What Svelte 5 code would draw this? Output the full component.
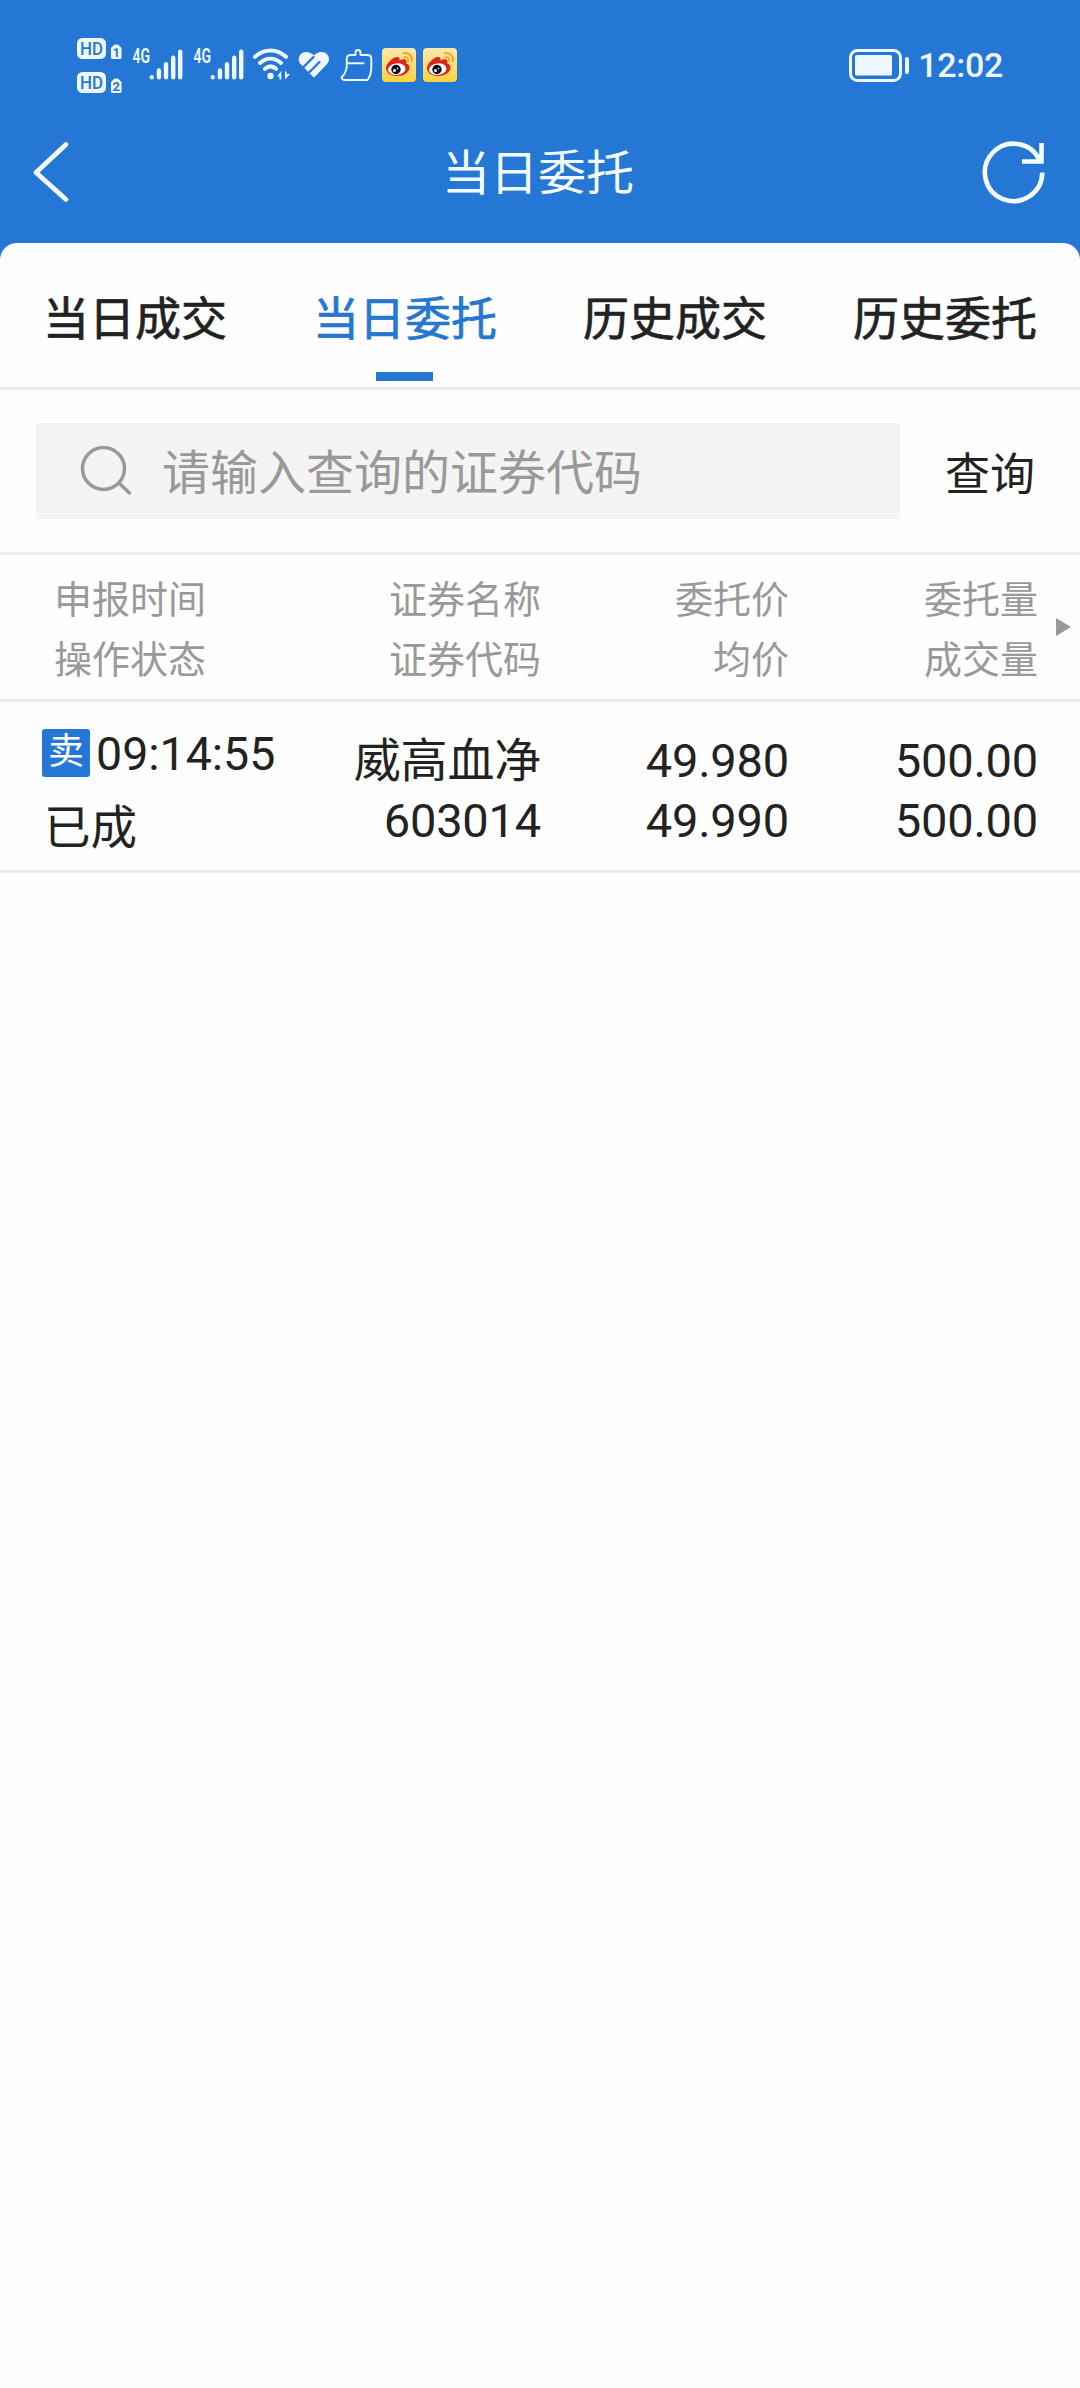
<script lang="ts">
    type Order = {
        side: string;
        time: string;
        status: string;
        name: string;
        code: string;
        price: string;
        avgPrice: string;
        amount: string;
        filled: string;
    };

    const tabs = ['当日成交', '当日委托', '历史成交', '历史委托'];
    const columns = [
        ['申报时间', '操作状态'],
        ['证券名称', '证券代码'],
        ['委托价', '均价'],
        ['委托量', '成交量']
    ];
    const orders: Order[] = [
        {
            side: '卖',
            time: '09:14:55',
            status: '已成',
            name: '威高血净',
            code: '603014',
            price: '49.980',
            avgPrice: '49.990',
            amount: '500.00',
            filled: '500.00'
        }
    ];

    let active = $state(1);
    let keyword = $state('');
</script>

{#snippet hd(slot: string)}
    <svg class="hd" width="45" height="21" viewBox="0 0 45 21">
        <rect width="29" height="21" rx="5.5" fill="#eef8ff" />
        <text x="3" y="16.600" font-size="18" font-weight="500" textLength="23" lengthAdjust="spacingAndGlyphs" fill="#2577d5">HD</text>
        <path d="M37.5 6.5h3.500l3.500 3.500v9.500a1.500 1.500 0 0 1-1.500 1.500h-7.500a1.500 1.500 0 0 1-1.500-1.500v-9.500z" fill="#eef8ff" />
        <text x="39.3" y="18.800" font-size="13" font-weight="700" text-anchor="middle" fill="#2577d5">{slot}</text>
    </svg>
{/snippet}

{#snippet signal()}
    <svg class="signal" width="51" height="50" viewBox="0 -8 51 50">
        <text class="net" x="0.500" y="14.500" font-size="20" font-weight="600" textLength="17.500" lengthAdjust="spacingAndGlyphs">4G</text>
        <path class="line" d="M19.700 29.300v.01M26.900 22.500v6.800M34 16.200v13.100M41.200 9.800v19.500M48.200 3.800v25.500" stroke-width="4.400" />
    </svg>
{/snippet}

{#snippet weibo()}
    <svg class="weibo" width="34" height="34" viewBox="0 0 34 34">
        <defs>
            <linearGradient id="weibo-bg" x1="0" y1="0" x2="0" y2="1">
                <stop offset="0" stop-color="#fde9ae" />
                <stop offset="1" stop-color="#ffd23c" />
            </linearGradient>
        </defs>
        <rect width="34" height="34" rx="4" fill="url(#weibo-bg)" />
        <path d="M4 20c0-4 6-10 10.500-11 2.500-.4 3.500 1 3 3.500 3-1.400 6.500-1.800 7 .5.200 1-.2 2-.5 2.500 2.500.6 3.500 2 3.500 4 0 5-6.500 8.500-12.500 8.500S4 25 4 20z" fill="#dd2418" />
        <ellipse cx="14.700" cy="21.200" rx="8.800" ry="5.800" transform="rotate(-7 14.700 21.200)" fill="#fff" />
        <circle cx="14" cy="21.500" r="4.700" fill="#111" />
        <circle cx="12.500" cy="22.600" r="1.500" fill="#fff" />
        <circle cx="15.500" cy="20.500" r=".8" fill="#fff" />
        <path d="M21.500 5.300c5-1.200 9.500 3.200 8.300 8M22.300 9.200c2.700-.6 4.300 1.400 3.700 3.800" stroke="#f2a32c" stroke-width="1.900" />
    </svg>
{/snippet}

<div class="page">
    <header>
        <div class="status">
            <div class="sims">
                {@render hd('1')}
                {@render hd('2')}
            </div>
            {@render signal()}
            {@render signal()}
            <svg class="wifi" width="40" height="34" viewBox="0 0 40 34">
                <path class="line" d="M3 8.800C12 .3 25 .3 34 8.800M8 15c6.500-5.800 14.500-5.800 21 0M13 20.800c3.500-3.200 7.500-3.200 11 0" stroke-width="4" />
                <circle cx="18.500" cy="28" r="3.200" fill="#eef8ff" />
                <path d="M25 28.500l4.300-5.500v8.500h-1.800v-3zM38 26l-5 5.500v-8.500l1.700 1v2z" fill="#eef8ff" />
            </svg>
            <svg class="heart" width="32" height="28" viewBox="0 0 32 28">
                <path d="M16 26.800L2.500 13C-2 7.500 2.500.3 9 1c3 .3 5.200 1.700 7 3.300C18 2.500 20 1.200 23 1c7-.3 10.500 7 6 12z" fill="#eef8ff" />
                <path d="M4 17.500L15.500 6M10 22.500L21.500 11" stroke="#2577d5" stroke-width="2.300" />
            </svg>
            <svg class="broom" width="34" height="34" viewBox="0 0 34 34">
                <path class="line" d="M15.500 7V4.500a2.500 2.500 0 0 1 5 0V7h7q3.800 0 3.800 3.500V19q0 8-3.800 13H5.500Q1.800 32 1.500 29.500C4.500 26.500 6.500 23 6.800 18v-7.500q0-3.500 3.700-3.500zM8.500 15.200h15" stroke-width="1.900" />
            </svg>
            {@render weibo()}
            {@render weibo()}
            <svg class="battery" width="61" height="33" viewBox="0 0 61 33">
                <rect class="line" x="1.500" y="1.500" width="50" height="30" rx="7" stroke-width="3" />
                <rect x="6" y="6" width="37" height="20.500" rx="1.500" fill="#eef8ff" />
                <path class="line" d="M58 10v13" stroke-width="4" />
            </svg>
            <span class="clock">12:02</span>
        </div>
        <nav>
            <svg class="back" width="44" height="66" viewBox="0 0 44 66">
                <path class="line" d="M36 4.500L6 32.500l30 27" stroke-width="4.800" />
            </svg>
            <h1>当日委托</h1>
            <svg class="refresh" width="66" height="66" viewBox="0 0 66 66">
                <path class="line" d="M61.300 32.500A28.700 28.700 0 1 1 58.500 20" stroke-width="4.600" />
                <path class="line" d="M60.500 3v18.500H41" stroke-width="4.600" />
            </svg>
        </nav>
    </header>

    <main>
        <div class="tabs">
            {#each tabs as tab, i}
                <button class:active={active === i} onclick={() => (active = i)}>{tab}</button>
            {/each}
        </div>

        <div class="search">
            <label>
                <svg width="54" height="54" viewBox="0 0 54 54">
                    <circle cx="24.500" cy="24.500" r="21" />
                    <path d="M39.500 38.500L51.500 50" />
                </svg>
                <input bind:value={keyword} placeholder="请输入查询的证券代码" />
            </label>
            <button>查询</button>
        </div>

        <div class="grid head">
            {#each columns as [top, bottom]}
                <div class="cell">
                    <span>{top}</span>
                    <span>{bottom}</span>
                </div>
            {/each}
            <i class="more"></i>
        </div>

        {#each orders as order}
            <div class="grid row">
                <div class="cell first">
                    <span class="when"><b>{order.side}</b><span>{order.time}</span></span>
                    <span class="state">{order.status}</span>
                </div>
                <div class="cell">
                    <span>{order.name}</span>
                    <span>{order.code}</span>
                </div>
                <div class="cell">
                    <span>{order.price}</span>
                    <span>{order.avgPrice}</span>
                </div>
                <div class="cell">
                    <span>{order.amount}</span>
                    <span>{order.filled}</span>
                </div>
            </div>
        {/each}
    </main>
</div>

<style>
    :global(body) {
        margin: 0;
        background: #fefefe;
    }
    .page {
        width: 1080px;
        min-height: 2388px;
        background: #2577d5;
        display: flex;
        flex-direction: column;
        font-family: Roboto, 'Noto Sans CJK SC', sans-serif;
        color: #222;
    }
    button,
    input {
        border: 0;
        padding: 0;
        background: none;
        font: inherit;
        color: inherit;
        outline: none;
    }
    header {
        height: 243px;
    }
    header svg {
        flex: none;
        fill: none;
        stroke-linecap: round;
        stroke-linejoin: round;
    }
    .line {
        stroke: #eef8ff;
    }

    /* status bar */
    .status {
        display: flex;
        align-items: center;
        height: 130px;
        padding: 0 77px 0 77px;
        box-sizing: border-box;
    }
    .sims {
        display: flex;
        flex-direction: column;
        gap: 13px;
        margin-right: 10px;
    }
    .sims svg {
        display: block;
    }
    .net {
        fill: #eef8ff;
    }
    .signal {
        margin-right: 10px;
    }
    .wifi {
        margin-left: -2px;
    }
    .heart {
        margin: 0 10px 0 6px;
    }
    .weibo {
        margin-left: 7.500px;
    }
    .battery {
        margin-left: auto;
    }
    .clock {
        margin-left: 8px;
        font-size: 34px;
        font-weight: 500;
        letter-spacing: -0.3px;
        color: #eef8ff;
    }

    nav {
        display: flex;
        align-items: center;
        justify-content: space-between;
        height: 85px;
        padding: 0 33px 0 30px;
    }
    nav .line {
        stroke: #f6fdff;
    }
    nav .refresh {
        stroke-linecap: butt;
        stroke-linejoin: miter;
    }
    h1 {
        margin: 0 0 7px 21px;
        font-size: 48px;
        font-weight: 400;
        color: #f6fdff;
    }

    main {
        flex: 1;
        background: #fefefe;
        border-radius: 17px 17px 0 0;
    }
    .tabs {
        display: flex;
        height: 144px;
        border-bottom: 3px solid #ececec;
    }
    .tabs button {
        position: relative;
        flex: 1;
        font-size: 46px;
        -webkit-text-stroke: 0.7px currentColor;
    }
    .tabs .active {
        color: #2577d0;
    }
    .tabs .active::after {
        content: '';
        position: absolute;
        left: 50%;
        bottom: 6px;
        width: 57px;
        height: 9px;
        margin-left: -29px;
        background: #2577d0;
    }

    .search {
        display: flex;
        align-items: center;
        height: 162px;
        padding-left: 36px;
        border-bottom: 3px solid #ececec;
    }
    .search label {
        display: flex;
        align-items: center;
        width: 864px;
        height: 96px;
        background: #f4f4f4;
    }
    .search svg {
        margin: 0 29px 0 43px;
        fill: none;
        stroke: #999;
        stroke-width: 3.500;
    }
    input {
        flex: 1;
        padding-top: 4px;
        font-size: 48px;
    }
    input::placeholder {
        color: #999;
        opacity: 1;
    }
    .search button {
        flex: 1;
        font-size: 45px;
    }

    .grid {
        position: relative;
        display: grid;
        grid-template-columns: 293px 248px 248px 249px;
        border-bottom: 3px solid #ececec;
    }
    .cell {
        display: flex;
        flex-direction: column;
        text-align: right;
        line-height: 60px;
    }
    .cell:first-child {
        text-align: left;
    }
    .head {
        height: 144px;
        font-size: 38px;
        color: #999;
    }
    .head .cell {
        padding-top: 15px;
    }
    .head .cell:first-child {
        padding-left: 54px;
    }
    .more {
        position: absolute;
        left: 1056px;
        top: 63px;
        border: solid transparent;
        border-width: 9.500px 0 9.500px 15px;
        border-left-color: #999;
    }
    .row {
        height: 168px;
        font-size: 47px;
        letter-spacing: -0.2px;
    }
    .row .cell {
        padding-top: 29px;
    }
    .row .first {
        padding: 18px 0 0 42px;
        line-height: 66px;
        font-size: 46.500px;
        letter-spacing: 0;
    }
    .when {
        display: flex;
        align-items: center;
        height: 66px;
    }
    .when span {
        padding-top: 2px;
    }
    .state {
        padding: 9px 0 0 2px;
    }
    b {
        width: 48px;
        height: 48px;
        margin-right: 6px;
        border-radius: 3px;
        background: #2577d5;
        color: #fff;
        font-size: 36px;
        font-weight: 400;
        line-height: 47px;
        text-align: center;
    }
</style>
